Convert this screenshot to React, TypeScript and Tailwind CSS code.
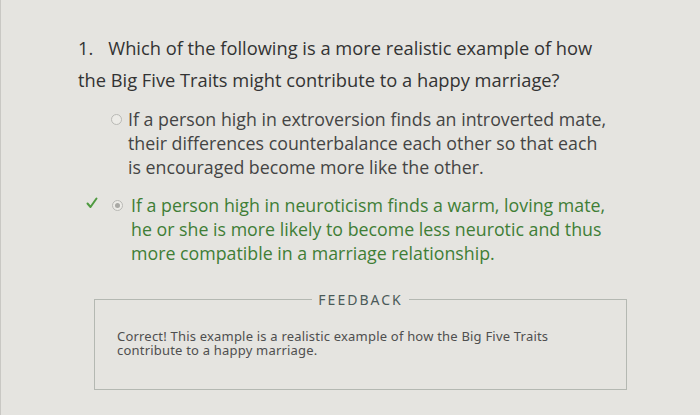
import React from "react";

function Radio({ checked }: { checked?: boolean }) {
  return (
    <span className="mt-[7px] flex h-[11px] w-[11px] shrink-0 items-center justify-center rounded-full border border-[#b9b9b5] bg-[#ecebe7]">
      {checked && <span className="h-[5px] w-[5px] rounded-full bg-[#a9a9a5]" />}
    </span>
  );
}

export default function App() {
  return (
    <div className="h-[415px] w-[700px] overflow-hidden border-l border-[#c9c8c4] bg-[#e5e4e0] pl-[77px] pt-[32px] font-['Open_Sans',sans-serif]">
      <p className="w-[540px] text-[18.3px] leading-[32px] text-[#333]">
        1.<span className="inline-block w-[15px]" />Which of the following is a more realistic example of how the Big Five Traits might contribute to a happy marriage?
      </p>

      <div className="mt-[11px] flex gap-[6px] pl-[33px]">
        <Radio />
        <p className="w-[485px] text-[17.8px] leading-[24px] text-[#444]">
          If a person high in extroversion finds an introverted mate, their differences counterbalance each other so that each is encouraged become more like the other.
        </p>
      </div>

      <div className="mt-[14px] flex items-start pl-[8px]">
        <svg className="mt-[4px] h-[12px] w-[12px] shrink-0" viewBox="0 0 12 12" fill="none">
          <path d="M1.5 6.5 L4.5 10 L10.5 1.5" stroke="#4f9a40" strokeWidth="2" strokeLinecap="round" strokeLinejoin="round" />
        </svg>
        <span className="ml-[14px] flex">
          <Radio checked />
        </span>
        <p className="ml-[8px] w-[490px] text-[17.8px] leading-[24px] text-[#3f7e36]">
          If a person high in neuroticism finds a warm, loving mate, he or she is more likely to become less neurotic and thus more compatible in a marriage relationship.
        </p>
      </div>

      <fieldset className="ml-[16px] mt-[24px] h-[101px] w-[533px] border border-[#b4b8b2] px-[22px]">
        <legend className="mx-auto px-[6px] font-['Noto_Sans',sans-serif] text-[14px] tracking-[2px] text-[#4b5a59]">
          FEEDBACK
        </legend>
        <p className="mt-[19px] w-[450px] font-['Noto_Sans',sans-serif] text-[13px] leading-[14px] tracking-[0.2px] text-[#4f4f4f]">
          Correct! This example is a realistic example of how the Big Five Traits contribute to a happy marriage.
        </p>
      </fieldset>
    </div>
  );
}
